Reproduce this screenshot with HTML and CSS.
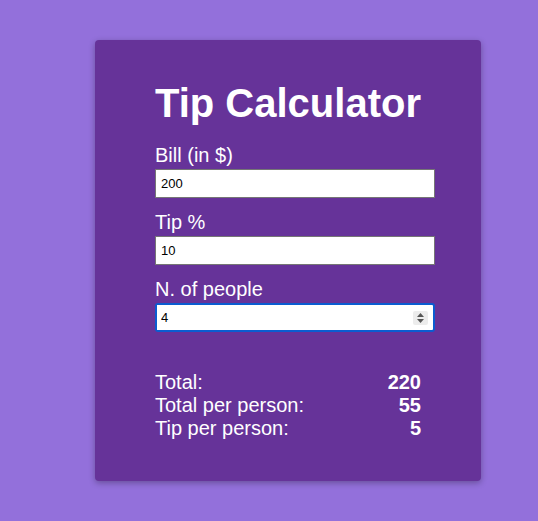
FILE: index.html
```html
<!DOCTYPE html>
<html lang="en">
<head>
  <meta charset="UTF-8" />
  <meta name="viewport" content="width=device-width, initial-scale=1.0"/>
  <title>Tip Calculator</title>
  <link rel="stylesheet" href="styles.css">
</head>
<body>

  <div class="card">
    <h1>Tip Calculator</h1>

    <div class="field">
      <label for="bill">Bill (in $)</label>
      <input id="bill" type="text" value="200">
    </div>

    <div class="field">
      <label for="tip">Tip %</label>
      <input id="tip" type="text" value="10">
    </div>

    <div class="field">
      <label for="people">N. of people</label>
      <div class="number-box">
        <input id="people" type="text" value="4">
        <span class="spinner">
          <svg width="9" height="12" viewBox="0 0 9 12">
            <path d="M4.5 1 L8 5 L1 5 Z" fill="#555"/>
            <path d="M4.5 11 L8 7 L1 7 Z" fill="#555"/>
          </svg>
        </span>
      </div>
    </div>

    <!-- resultados -->
    <div class="results">
      <div class="row"><span>Total:</span><b>220</b></div>
      <div class="row"><span>Total per person:</span><b>55</b></div>
      <div class="row"><span>Tip per person:</span><b>5</b></div>
    </div>
  </div>

</body>
</html>
```

FILE: styles.css
```css
body {
  margin: 0;
  padding: 0;
  font-family: "Liberation Sans", Arial, Helvetica, sans-serif;
  background-color: #9370db;
  color: white;
  min-height: 100vh;
}

.card {
  box-sizing: border-box;
  width: 386px;
  margin: 40px 0 0 95px;
  padding: 40px 46px 41px 60px;
  background-color: #663399;
  border-radius: 4px;
  box-shadow: 0 2px 6px rgba(0, 0, 0, 0.3);
}

h1 {
  margin: 0 0 18px;
  font-size: 40px;
  line-height: 46px;
  font-weight: bold;
}

.field {
  margin-bottom: 13px;
}

.field label {
  display: block;
  font-size: 20px;
  line-height: 23px;
  margin-bottom: 2px;
}

.field input {
  box-sizing: border-box;
  display: block;
  width: 100%;
  height: 29px;
  padding: 0 5px;
  font-family: "Liberation Sans", Arial, sans-serif;
  font-size: 13px;
  color: black;
  background: white;
  border: 1px solid #767676;
  outline: none;
}

.number-box {
  box-sizing: border-box;
  display: flex;
  align-items: center;
  height: 29px;
  background: white;
  border: 2px solid #0b5cd0;
  border-radius: 3px;
  padding-right: 5px;
}

.number-box input {
  flex: 1;
  height: 25px;
  border: none;
  padding: 0 4px;
}

.spinner {
  display: flex;
  align-items: center;
  justify-content: center;
  width: 15px;
  height: 14px;
  background-color: #ececec;
  border-radius: 2px;
}

.results {
  width: 266px;
  margin-top: 39px;
  font-size: 20px;
  line-height: 23px;
}

.row {
  display: flex;
  justify-content: space-between;
}
```
